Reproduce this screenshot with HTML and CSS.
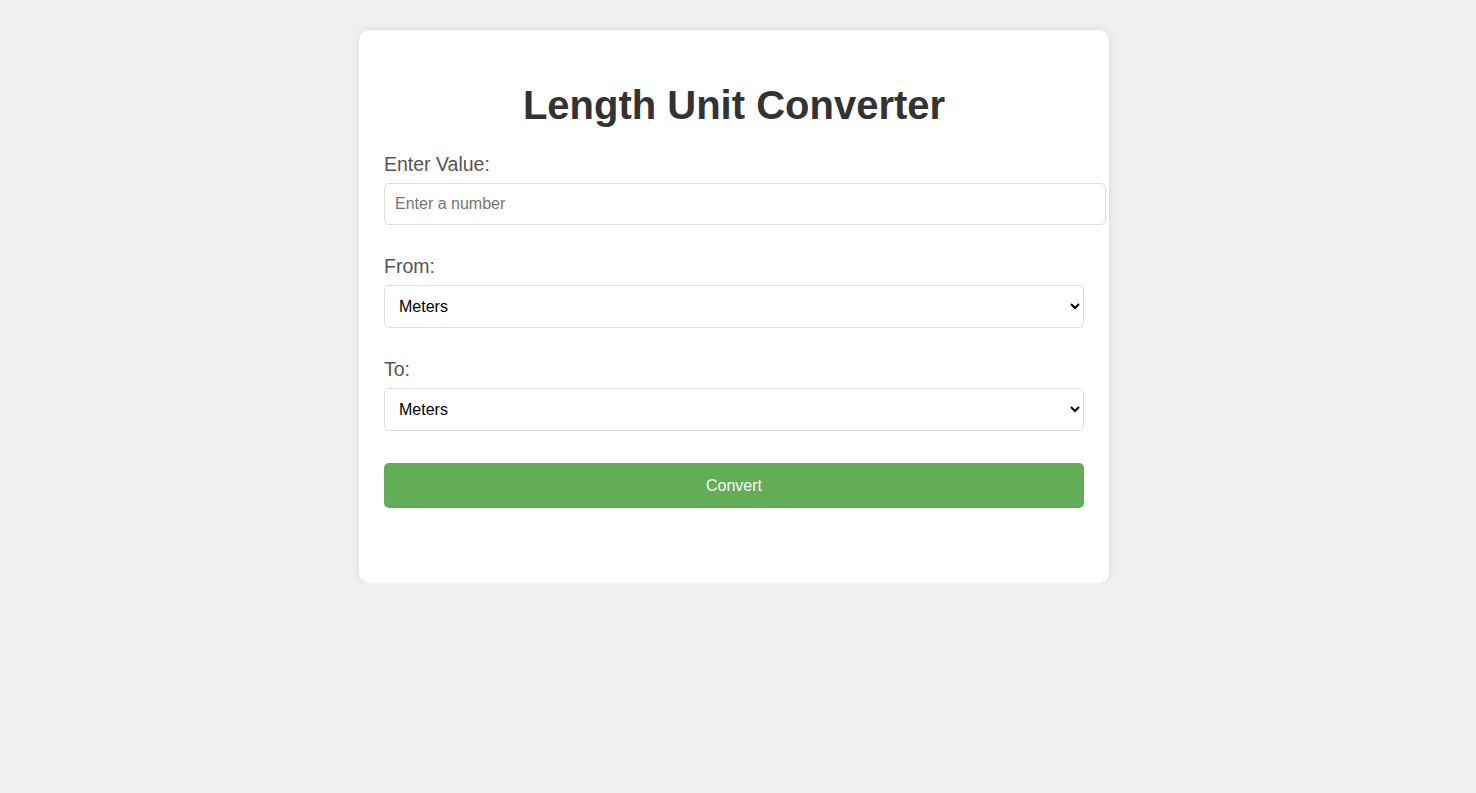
FILE: index.html
```html
<!DOCTYPE html>
<html lang="en">
<head>
<meta charset="utf-8">
<title>Length Unit Converter</title>
<link rel="stylesheet" href="styles.css">
</head>
<body>
<div class="container">
  <h1 class="title">Length Unit Converter</h1>
  <div class="form-group">
    <label class="label" for="value">Enter Value:</label>
    <input class="text-input" id="value" type="number" placeholder="Enter a number">
  </div>
  <div class="form-group">
    <label class="label" for="from">From:</label>
    <select class="select" id="from">
      <option>Meters</option>
      <option>Kilometers</option>
      <option>Centimeters</option>
      <option>Millimeters</option>
      <option>Miles</option>
      <option>Yards</option>
      <option>Feet</option>
      <option>Inches</option>
    </select>
  </div>
  <div class="form-group">
    <label class="label" for="to">To:</label>
    <select class="select" id="to">
      <option>Meters</option>
      <option>Kilometers</option>
      <option>Centimeters</option>
      <option>Millimeters</option>
      <option>Miles</option>
      <option>Yards</option>
      <option>Feet</option>
      <option>Inches</option>
    </select>
  </div>
  <button class="button" type="button">Convert</button>
  <div class="result"></div>
</div>
</body>
</html>
```
FILE: styles.css
```css
html, body {
  margin: 0;
  padding: 0;
}
body {
  background: #f0f0f0;
  font-family: "Liberation Sans", Arial, sans-serif;
  padding: 30px 8px 0 0;
}
.container {
  width: 700px;
  margin: 0 auto;
  padding: 25px;
  background: #ffffff;
  border-radius: 10px;
  box-shadow: 0 0 10px rgba(0, 0, 0, 0.1);
}
.title {
  margin: 27px 0 25px;
  font-size: 40px;
  line-height: 46px;
  text-align: center;
  color: #333333;
  font-weight: bold;
}
.form-group {
  margin-bottom: 30px;
}
.label {
  display: block;
  font-size: 19.5px;
  line-height: 22px;
  color: #555555;
  margin-bottom: 8px;
}
.text-input {
  display: block;
  width: 100%;
  padding: 10px;
  font-size: 16px;
  line-height: 20px;
  height: 20px;
  border: 1px solid #dddddd;
  border-radius: 5px;
  font-family: "Liberation Sans", Arial, sans-serif;
  color: #333333;
  box-sizing: content-box;
  outline: none;
}
.text-input::placeholder {
  color: #757575;
}
.select {
  display: block;
  width: 100%;
  height: 43px;
  padding: 10px;
  font-size: 16px;
  border: 1px solid #dddddd;
  border-radius: 5px;
  background: #ffffff;
  color: #000000;
  font-family: "Liberation Sans", Arial, sans-serif;
  box-sizing: border-box;
}
.button {
  display: block;
  width: 100%;
  height: 45px;
  padding: 0;
  margin-top: 32px;
  background: #62ad56;
  color: #ffffff;
  font-size: 16px;
  font-family: "Liberation Sans", Arial, sans-serif;
  border: none;
  border-radius: 5px;
  cursor: pointer;
}
.form-group:last-of-type {
  margin-bottom: 0;
}
.result {
  margin-top: 20px;
  height: 30px;
}
```
